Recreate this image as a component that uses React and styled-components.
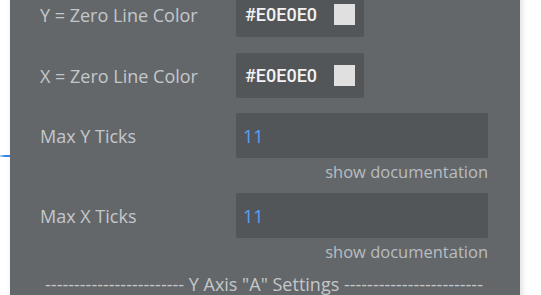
import React from "react";
import styled, { createGlobalStyle } from "styled-components";

const Global = createGlobalStyle`
  html, body { margin: 0; padding: 0; overflow: hidden; background: #ffffff; }
  #root { width: 541px; height: 295px; overflow: hidden; }
`;

const Page = styled.div`
  display: flex;
  align-items: flex-start;
  width: 541px;
  height: 295px;
  overflow: hidden;
`;

const Gutter = styled.div`
  width: 10px;
  flex: none;
  padding-top: 155px;
`;

const SelectLine = styled.div`
  height: 2px;
  background: linear-gradient(to right, rgba(50,135,230,0.35), #2f88ea 50%);
`;

const Panel = styled.div`
  width: 510px;
  flex: none;
  margin-top: -8px;
  padding: 0 32px 40px 30px;
  box-sizing: border-box;
  background: #63676a;
  box-shadow: 2px 0 6px rgba(0, 0, 0, 0.14);
  font-family: "Open Sans", sans-serif;
  display: flex;
  flex-direction: column;
`;

const Row = styled.div`
  display: grid;
  grid-template-columns: 196px 1fr;
  align-items: center;
  height: 45px;
  margin-top: ${(p) => p.$gap || 0}px;
`;

const Label = styled.div`
  color: #c3c7ca;
  font-size: 18px;
  line-height: 22px;
  white-space: nowrap;
`;

const ColorBox = styled.div`
  width: 128px;
  height: 45px;
  box-sizing: border-box;
  background: #525659;
  border-radius: 2px;
  display: flex;
  align-items: center;
  padding: 0 9px 0 9px;
  justify-content: space-between;
`;

const Hex = styled.span`
  font-family: Roboto, sans-serif;
  font-weight: 500;
  font-size: 18px;
  color: #f2f2f2;
`;

const Swatch = styled.span`
  width: 21px;
  height: 21px;
  background: ${(p) => p.$color};
`;

const NumberBox = styled.div`
  height: 45px;
  box-sizing: border-box;
  background: #525659;
  border-radius: 2px;
  display: flex;
  align-items: center;
  padding-left: 7px;
  color: #5d9ff5;
  font-size: 18px;
`;

const DocLink = styled.div`
  text-align: right;
  color: #b9bdc0;
  font-size: 16.5px;
  line-height: 22px;
  margin-top: 3px;
`;

const SectionHeader = styled.div`
  text-align: center;
  color: #c3c7ca;
  font-size: 18px;
  line-height: 22px;
  margin-top: ${(p) => p.$gap || 0}px;
  white-space: nowrap;
`;

const ColorRow = ({ label, color, gap }) => (
  <Row $gap={gap}>
    <Label>{label}</Label>
    <ColorBox>
      <Hex>{color}</Hex>
      <Swatch $color={color} />
    </ColorBox>
  </Row>
);

const NumberRow = ({ label, value, gap }) => (
  <>
    <Row $gap={gap}>
      <Label>{label}</Label>
      <NumberBox>{value}</NumberBox>
    </Row>
    <DocLink>show documentation</DocLink>
  </>
);

const dashes = "-".repeat(24);

export default function App() {
  return (
    <>
      <Global />
      <Page>
        <Gutter>
          <SelectLine />
        </Gutter>
        <Panel>
          <ColorRow label="Y = Zero Line Color" color="#E0E0E0" />
          <ColorRow label="X = Zero Line Color" color="#E0E0E0" gap={16} />
          <NumberRow label="Max Y Ticks" value="11" gap={15} />
          <NumberRow label="Max X Ticks" value="11" gap={10} />
          <SectionHeader $gap={10}>
            {dashes} Y Axis "A" Settings {dashes}
          </SectionHeader>
        </Panel>
      </Page>
    </>
  );
}
